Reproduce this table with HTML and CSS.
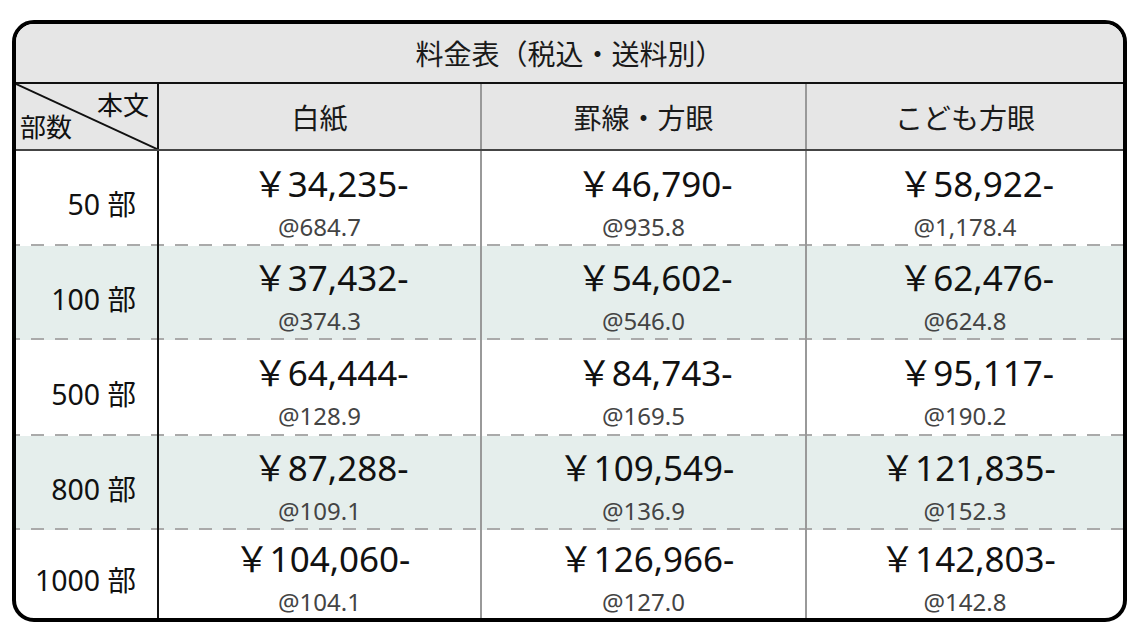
FILE: index.html
```html
<!DOCTYPE html>
<html lang="ja">
<head>
<meta charset="utf-8">
<link rel="stylesheet" href="styles.css">
</head>
<body>
<div class="card">
  <div class="title">料金表（税込・送料別）</div>
  <div class="row head">
    <div class="cell corner">
      <svg class="diag" width="141" height="65" viewBox="0 0 141 65" preserveAspectRatio="none"><line x1="0" y1="0" x2="141" y2="65" stroke="#111" stroke-width="2"/></svg>
      <span class="c-top">本文</span>
      <span class="c-bot">部数</span>
    </div>
    <div class="cell h">白紙</div>
    <div class="cell h">罫線・方眼</div>
    <div class="cell h">こども方眼</div>
  </div>
  <div class="row body r1">
    <div class="cell label">50 部</div>
    <div class="cell v"><span class="price">￥34,235-</span><span class="unit">@684.7</span></div>
    <div class="cell v"><span class="price">￥46,790-</span><span class="unit">@935.8</span></div>
    <div class="cell v"><span class="price">￥58,922-</span><span class="unit">@1,178.4</span></div>
  </div>
  <div class="row body r2 alt">
    <div class="cell label">100 部</div>
    <div class="cell v"><span class="price">￥37,432-</span><span class="unit">@374.3</span></div>
    <div class="cell v"><span class="price">￥54,602-</span><span class="unit">@546.0</span></div>
    <div class="cell v"><span class="price">￥62,476-</span><span class="unit">@624.8</span></div>
  </div>
  <div class="row body r3">
    <div class="cell label">500 部</div>
    <div class="cell v"><span class="price">￥64,444-</span><span class="unit">@128.9</span></div>
    <div class="cell v"><span class="price">￥84,743-</span><span class="unit">@169.5</span></div>
    <div class="cell v"><span class="price">￥95,117-</span><span class="unit">@190.2</span></div>
  </div>
  <div class="row body r4 alt">
    <div class="cell label">800 部</div>
    <div class="cell v"><span class="price">￥87,288-</span><span class="unit">@109.1</span></div>
    <div class="cell v"><span class="price">￥109,549-</span><span class="unit">@136.9</span></div>
    <div class="cell v"><span class="price">￥121,835-</span><span class="unit">@152.3</span></div>
  </div>
  <div class="row body r5 last">
    <div class="cell label">1000 部</div>
    <div class="cell v"><span class="price">￥104,060-</span><span class="unit">@104.1</span></div>
    <div class="cell v"><span class="price">￥126,966-</span><span class="unit">@127.0</span></div>
    <div class="cell v"><span class="price">￥142,803-</span><span class="unit">@142.8</span></div>
  </div>
</div>
</body>
</html>
```
FILE: styles.css
```css
* { box-sizing: border-box; }
body {
  margin: 0;
  background: #fff;
  font-family: "Noto Sans", "Noto Sans CJK JP", sans-serif;
  color: #111;
}
.card {
  margin: 20px 0 0 12px;
  width: 1115px;
  height: 602px;
  border: 4px solid #000;
  border-radius: 22px;
  overflow: hidden;
  display: flex;
  flex-direction: column;
}
.title {
  height: 60px;
  background: #e6e6e6;
  border-bottom: 2px solid #111;
  display: flex;
  align-items: center;
  justify-content: center;
  font-size: 28px;
  color: #1a1a1a;
}
.row {
  display: grid;
  grid-template-columns: 141px 323px 325px 1fr;
}
.cell {
  border-left: 2px solid #999;
}
.cell:first-child { border-left: none; }
.cell:nth-child(2) { border-left-color: #111; }
.head {
  height: 67px;
  background: #e6e6e6;
  border-bottom: 2px solid #444;
}
.h {
  display: flex;
  align-items: center;
  justify-content: center;
  font-size: 28px;
  color: #1a1a1a;
}
.corner {
  position: relative;
}
.diag {
  position: absolute;
  left: 0;
  top: 0;
}
.c-top {
  position: absolute;
  right: 8px;
  top: 6px;
  font-size: 26px;
  line-height: 1.2;
}
.c-bot {
  position: absolute;
  left: 4px;
  bottom: 6px;
  font-size: 26px;
  line-height: 1.2;
}
.body {
  background-image: linear-gradient(to right, #aaa 13px, transparent 13px);
  background-size: 24px 2px;
  background-repeat: repeat-x;
  background-position: 15px 100%;
}
.r1 { height: 95px; }
.r2 { height: 94px; }
.r3 { height: 96px; }
.r4 { height: 94px; }
.last { flex: 1; background-image: none; }
.alt { background-color: #e5eeec; }
.label {
  display: flex;
  align-items: center;
  justify-content: flex-end;
  padding-right: 21px;
  padding-top: 8px;
  font-size: 28.5px;
}
.v {
  display: flex;
  flex-direction: column;
  align-items: center;
  justify-content: center;
  padding-top: 8px;
}
.price {
  display: block;
  min-width: 178px;
  padding-left: 6px;
  text-align: right;
  font-size: 35px;
  line-height: 40px;
  color: #111;
}
.unit {
  display: block;
  margin-top: 8px;
  font-size: 24px;
  line-height: 30px;
  color: #444;
}
```
